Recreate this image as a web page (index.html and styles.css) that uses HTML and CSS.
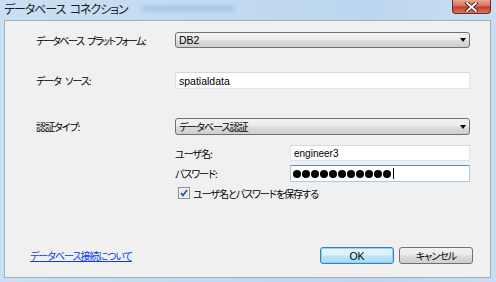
FILE: index.html
```html
<!DOCTYPE html>
<html lang="ja">

<head>
    <meta charset="UTF-8">
    <title>データベース コネクション</title>
    <link rel="stylesheet" href="styles.css">
</head>

<body>
    <div class="window">
        <div class="titlebar">
            <span class="title">データベース コネクション</span>
            <span class="ghost"></span>
            <div class="close">
                <svg width="13" height="10" viewBox="0 0 13 10">
                    <path d="M2 1 L11 9 M11 1 L2 9" stroke="#4a2520" stroke-width="3.6" stroke-linecap="square" />
                    <path d="M2 1 L11 9 M11 1 L2 9" stroke="#ffffff" stroke-width="1.8" stroke-linecap="square" />
                </svg>
            </div>
        </div>

        <div class="client">
            <div class="row first">
                <span class="lbl tight">データベース プラットフォーム:</span>
                <div class="combo">DB2<span class="arrow"></span></div>
            </div>
            <div class="row second">
                <span class="lbl">データ ソース:</span>
                <div class="textbox">spatialdata</div>
            </div>
            <div class="row third">
                <span class="lbl">認証タイプ:</span>
                <div class="combo jp">データベース認証<span class="arrow"></span></div>
            </div>

            <div class="creds">
                <div class="subrow">
                    <span class="sublbl">ユーザ名:</span>
                    <div class="textbox small">engineer3</div>
                </div>
                <div class="subrow pwd">
                    <span class="sublbl">パスワード:</span>
                    <div class="textbox focus">
                        <span class="dot"></span><span class="dot"></span><span class="dot"></span><span class="dot"></span><span class="dot"></span><span class="dot"></span><span class="dot"></span><span class="dot"></span><span class="dot"></span><span class="dot"></span><span class="dot"></span><span class="caret"></span>
                    </div>
                </div>
                <div class="check">
                    <span class="box">
                        <svg width="12" height="12" viewBox="0 0 12 12">
                            <rect x="0.5" y="0.5" width="11" height="11" fill="#f4f4f4" stroke="#8e8f8f" />
                            <rect x="2" y="2" width="8" height="8" fill="#e6ebf1" />
                            <path d="M3 6 L5 8.5 L9 3" fill="none" stroke="#2a4d8a" stroke-width="1.6" />
                        </svg>
                    </span>
                    ユーザ名とパスワードを保存する
                </div>
            </div>

            <div class="footer">
                <a href="#" class="link">データベース接続について</a>
                <div class="buttons">
                    <button class="btn default">OK</button>
                    <button class="btn">キャンセル</button>
                </div>
            </div>
        </div>
    </div>
</body>

</html>
```

FILE: styles.css
```css
body {
    margin: 0;
    background: #c6ddf2;
    font-family: "Noto Sans CJK JP", sans-serif;
    font-size: 10px;
    letter-spacing: -1px;
    word-spacing: 3px;
    font-feature-settings: "palt";
    color: #000;
}

.window {
    width: 496px;
    height: 282px;
    box-sizing: border-box;
    padding: 0 5px 4px 4px;
    display: flex;
    flex-direction: column;
    background: linear-gradient(90deg, #cadff3 0%, #c2daf1 40%, #bcd6ef 75%, #c9def2 100%);
}

.titlebar {
    height: 20px;
    display: flex;
    align-items: flex-start;
    position: relative;
}

.title {
    font-size: 12px;
    line-height: 18px;
    letter-spacing: -1.1px;
    word-spacing: 3px;
    color: #1b1b1b;
}

.ghost {
    position: absolute;
    left: 138px;
    top: 6px;
    width: 92px;
    height: 5px;
    background: #8fb2d8;
    filter: blur(2px);
    opacity: 0.6;
}

.close {
    margin-left: auto;
    width: 39px;
    height: 14px;
    box-sizing: border-box;
    border: 1px solid #6b2a22;
    border-top: none;
    border-radius: 0 0 4px 4px;
    background: linear-gradient(#e9a795 0%, #d5705e 45%, #c0412f 55%, #d8745f 100%);
    display: flex;
    align-items: center;
    justify-content: center;
}

.client {
    height: 258px;
    box-sizing: border-box;
    border: 1px solid #a3aebb;
    background: #f0f0f0;
    padding: 11px 0 13px 0;
    display: flex;
    flex-direction: column;
}

.row {
    display: flex;
    align-items: center;
    margin-left: 31px;
}

.second {
    margin-top: 24px;
}

.third {
    margin-top: 29px;
}

.lbl {
    width: 139px;
    white-space: nowrap;
}

.lbl.tight {
    letter-spacing: -1.5px;
}

.combo {
    width: 295px;
    height: 17px;
    box-sizing: border-box;
    border: 1px solid #707070;
    border-radius: 3px;
    background: linear-gradient(#f2f2f2 0%, #ebebeb 48%, #dddddd 52%, #cfcfcf 100%);
    font-family: "Liberation Sans", sans-serif;
    font-size: 10.5px;
    letter-spacing: 0;
    padding-left: 3px;
    line-height: 15px;
    display: flex;
    align-items: center;
}

.first .combo {
    height: 16px;
}

.combo.jp {
    font-family: "Noto Sans CJK JP", sans-serif;
    font-size: 10px;
    letter-spacing: -1px;
}

.arrow {
    margin-left: auto;
    margin-right: 3px;
    width: 0;
    height: 0;
    border-left: 3.5px solid transparent;
    border-right: 3.5px solid transparent;
    border-top: 4px solid #000;
}

.textbox {
    width: 295px;
    height: 17px;
    box-sizing: border-box;
    background: #fff;
    border: 1px solid #e2e3ea;
    border-top-color: #d5d8de;
    font-family: "Liberation Sans", sans-serif;
    font-size: 10.5px;
    letter-spacing: 0;
    padding-left: 3px;
    display: flex;
    align-items: center;
}

.creds {
    margin-left: 170px;
    margin-top: 10px;
}

.subrow {
    display: flex;
    align-items: center;
}

.pwd {
    margin-top: 4px;
}

.sublbl {
    width: 115px;
}

.textbox.small {
    width: 180px;
    height: 16px;
    font-size: 10px;
}

.textbox.focus {
    width: 180px;
    border-color: #a9c9e4;
    border-top-color: #5b8fbf;
    padding-left: 2px;
    gap: 1px;
}

.dot {
    width: 8px;
    height: 8px;
    border-radius: 50%;
    background: #000;
}

.caret {
    width: 1px;
    height: 11px;
    background: #000;
    margin-left: 1px;
}

.check {
    margin-top: 4px;
    margin-left: 3px;
    display: flex;
    align-items: center;
    height: 14px;
}

.box {
    display: flex;
    margin-right: 3px;
}

.footer {
    margin-top: auto;
    display: flex;
    align-items: center;
    padding-left: 25px;
    padding-right: 17px;
}

.link {
    color: #0b3ee6;
    text-decoration: underline;
}

.buttons {
    margin-left: auto;
    display: flex;
    gap: 5px;
}

.btn {
    width: 74px;
    height: 17px;
    box-sizing: border-box;
    border: 1px solid #707070;
    border-radius: 3px;
    background: linear-gradient(#f2f2f2 0%, #ebebeb 48%, #dddddd 52%, #cfcfcf 100%);
    font-family: "Noto Sans CJK JP", sans-serif;
    font-size: 10px;
    letter-spacing: -1px;
    font-feature-settings: "palt";
    padding: 0;
    line-height: 14px;
    color: #000;
}

.btn.default {
    border-color: #3c7fb1;
    background: linear-gradient(#eaf6fd 0%, #d9f0fc 48%, #bee6fd 52%, #a7d9f5 100%);
    box-shadow: inset 0 0 0 1px #8fd0f5;
    font-family: "Liberation Sans", sans-serif;
    font-size: 10.5px;
    letter-spacing: 0;
}
```
